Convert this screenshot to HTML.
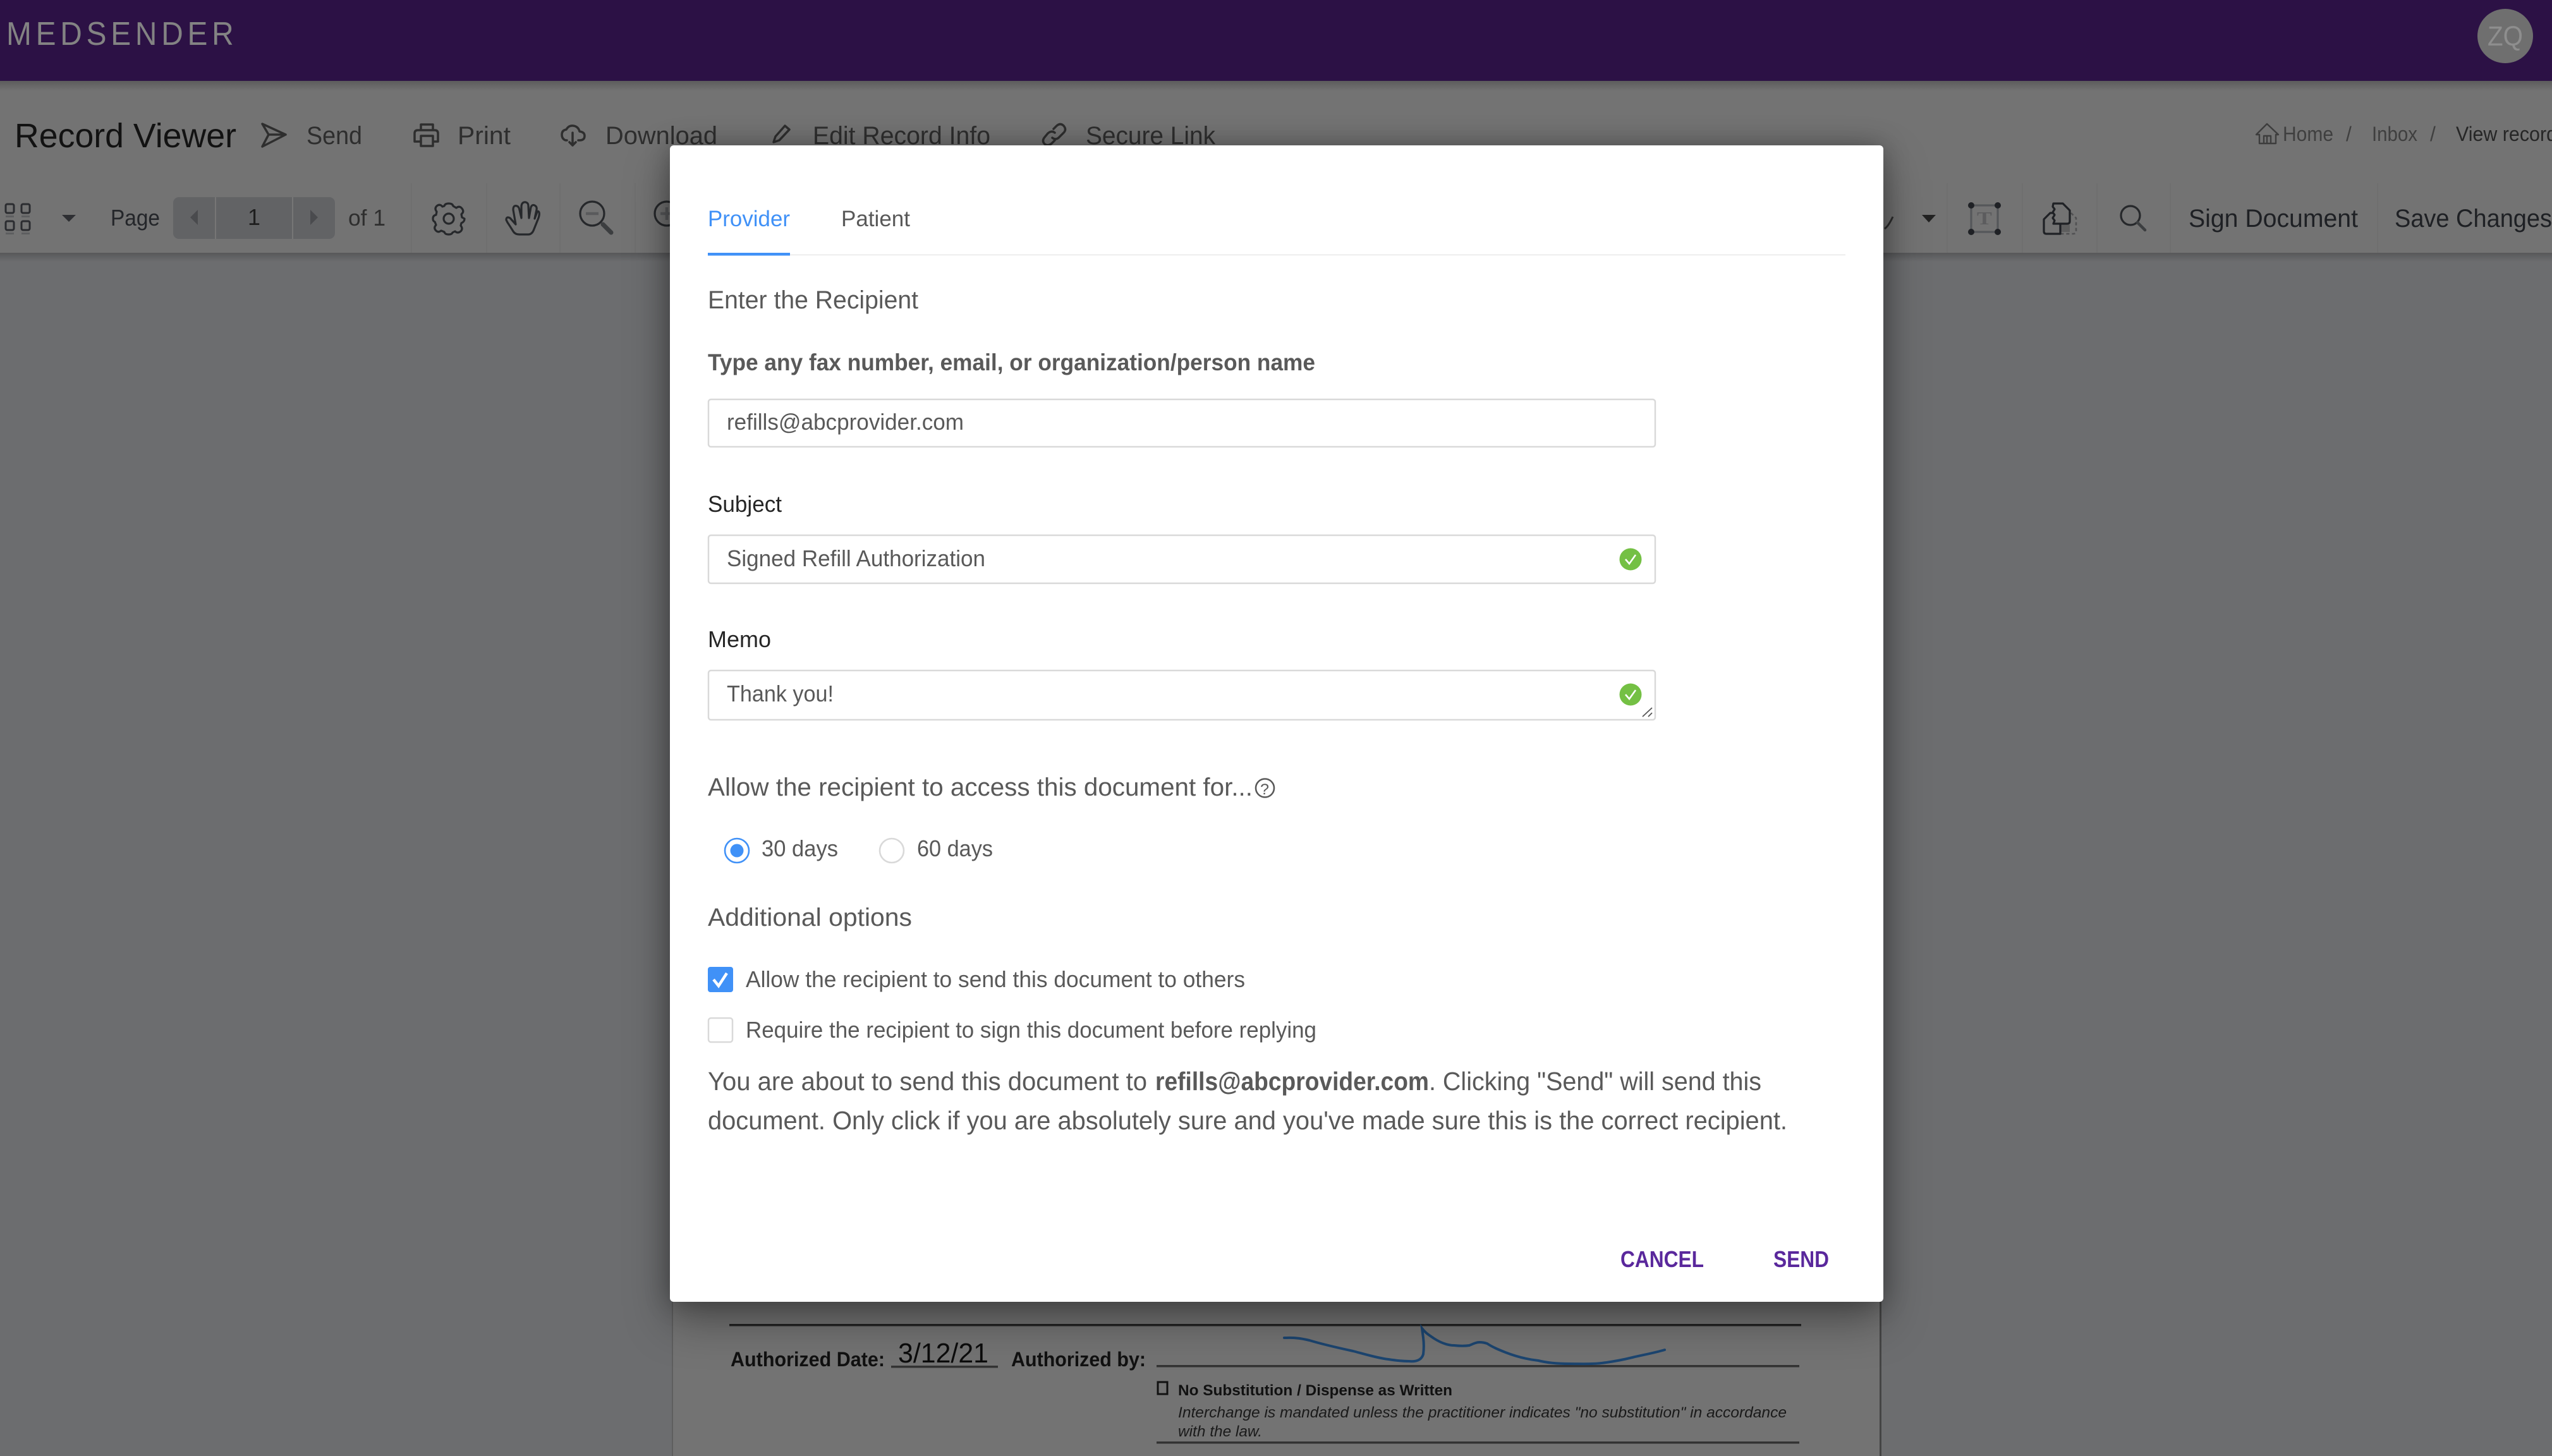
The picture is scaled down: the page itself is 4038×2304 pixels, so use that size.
<!DOCTYPE html>
<html><head><meta charset="utf-8"><style>
html,body{margin:0;padding:0;background:#6c6d6f}
body{width:4038px;height:2304px;position:relative;overflow:hidden;font-family:"Liberation Sans",sans-serif}
svg{position:absolute;left:0;top:0}
text{font-family:"Liberation Sans",sans-serif}
.m{position:absolute;left:1060px;top:230px;width:1920px;height:1830px;background:#fff;border-radius:6px;box-shadow:0 30px 70px rgba(0,0,0,.34),0 0 40px rgba(0,0,0,.28)}
</style></head><body>
<svg width="4038" height="2304" viewBox="0 0 4038 2304">
<defs><linearGradient id="s" x1="0" y1="0" x2="0" y2="1"><stop offset="0" stop-color="#000" stop-opacity=".2"/><stop offset="1" stop-color="#000" stop-opacity="0"/></linearGradient></defs>
<rect width="4038" height="2304" fill="#6c6d6f"/>
<rect x="1064" y="400" width="1911" height="1904" fill="#737373"/>
<rect x="1063" y="400" width="2" height="1904" fill="#5e5e5e"/>
<rect x="2974" y="400" width="3" height="1904" fill="#444"/>
<rect y="128" width="4038" height="272" fill="#737373"/>
<rect y="128" width="4038" height="16" fill="url(#s)"/>
<rect y="400" width="4038" height="14" fill="url(#s)"/>
<rect width="4038" height="128" fill="#2c1145"/>
<g transform="translate(10,71) scale(.92,1)"><text x="0" y="0" font-size="52" textLength="391" lengthAdjust="spacing" fill="#838383">MEDSENDER</text></g>
<ellipse cx="3964" cy="57" rx="44" ry="43" fill="#6f6f6f"/>
<text x="3936" y="72" font-size="44" textLength="56" lengthAdjust="spacingAndGlyphs" fill="#8e8e8e">ZQ</text>

<text x="23" y="233" font-size="54" textLength="351" lengthAdjust="spacingAndGlyphs" fill="#121212">Record Viewer</text>
<g fill="#2e2e2e" font-size="40">
<text x="485" y="228" textLength="88" lengthAdjust="spacingAndGlyphs">Send</text>
<text x="724" y="228" textLength="84" lengthAdjust="spacingAndGlyphs">Print</text>
<text x="958" y="228" textLength="177" lengthAdjust="spacingAndGlyphs">Download</text>
<text x="1286" y="228" textLength="281" lengthAdjust="spacingAndGlyphs">Edit Record Info</text>
<text x="1718" y="228" textLength="205" lengthAdjust="spacingAndGlyphs">Secure Link</text>
</g>
<g fill="none" stroke="#2e2e2e" stroke-width="3.5" stroke-linejoin="round" stroke-linecap="round">
<path d="M415 196L452 213L415 232L425 213ZM425 213H452"/>
<path d="M666 206V197H685V206M662 206H688Q693 206 693 211V224H685M666 224H656V211Q656 206 661 206M666 215H685V231H666Z"/>
<path d="M897 222H895Q889 220 889 213Q889 206 896 205Q900 198 907 199Q915 200 917 208Q925 209 925 215Q925 222 917 222H915M906 210V230M901 225L906 230L911 225"/>
<path d="M1224 225L1227 216L1242 199L1249 205L1233 222ZM1218 232H1256"/>
<path d="M1667 204L1672 199Q1678 194 1683 199Q1688 205 1683 210L1675 218Q1670 222 1665 218M1669 210Q1664 206 1658 211L1653 217Q1648 223 1653 228Q1658 232 1664 227L1669 222"/>
</g>

<rect x="274" y="312" width="256" height="66" rx="9" fill="#626365"/>
<rect x="340" y="312" width="2" height="66" fill="#767676"/><rect x="462" y="312" width="2" height="66" fill="#767676"/>
<path d="M313 332L301 344L313 356Z" fill="#4a4b4e"/>
<path d="M491 332L503 344L491 356Z" fill="#4a4b4e"/>
<g fill="none" stroke="#2b2c30" stroke-width="3">
<rect x="9" y="323" width="13" height="14" rx="2.5"/><rect x="34" y="323" width="13" height="14" rx="2.5"/>
<rect x="9" y="350" width="13" height="14" rx="2.5"/><rect x="34" y="350" width="13" height="14" rx="2.5"/>
</g>
<g fill="#5d5e60"><rect x="9" y="341" width="13" height="3"/><rect x="34" y="341" width="13" height="3"/><rect x="9" y="368" width="13" height="3"/><rect x="34" y="368" width="13" height="3"/></g>
<path d="M98 340H120L109 351Z" fill="#2e2f33"/>
<g fill="#24262a" font-size="36">
<text x="175" y="357" textLength="78" lengthAdjust="spacingAndGlyphs">Page</text>
<text x="551" y="357" textLength="59" lengthAdjust="spacingAndGlyphs" fill="#2e2e2e">of 1</text>
</g>
<text x="392" y="356" font-size="36" textLength="20" lengthAdjust="spacingAndGlyphs" fill="#1e1e1e">1</text>
<g fill="#6f6f6f">
<rect x="650" y="290" width="2" height="110"/><rect x="769" y="290" width="2" height="110"/><rect x="885" y="290" width="2" height="110"/><rect x="1004" y="290" width="2" height="110"/>
<rect x="3080" y="290" width="2" height="110"/><rect x="3199" y="290" width="2" height="110"/><rect x="3317" y="290" width="2" height="110"/><rect x="3433" y="290" width="2" height="110"/><rect x="3761" y="290" width="2" height="110"/>
</g>
<g fill="none" stroke="#26282b" stroke-width="3.2" stroke-linejoin="round" stroke-linecap="round">
<circle cx="710" cy="346" r="8"/>
<path d="M703 326Q704 322 710 322Q716 322 717 326L722 329Q727 325 731 330Q735 335 730 339L731 344Q735 346 735 346Q735 351 730 353L729 357Q733 362 729 366Q724 370 720 366L716 368Q715 371 710 371Q704 371 703 367L698 365Q693 369 689 364Q686 360 690 356L688 351Q685 350 685 346Q685 341 690 340L691 335Q687 330 691 326Q696 322 700 327Z"/>
<path d="M812 366Q807 358 803 352L801 348Q801 342 807 345L816 355L812 332Q812 324 818 326Q821 327 822 332L825 345V326Q826 319 832 320Q836 321 836 326L837 345L840 328Q842 323 846 325Q850 327 849 332L846 346L849 338Q851 332 853 336Q854 339 852 345L844 365Q841 371 836 371H822Q815 371 812 366Z"/>
<circle cx="937" cy="338" r="19"/>
</g>
<path d="M954 355L967 368" stroke="#3c3e40" stroke-width="7" stroke-linecap="round"/>
<path d="M927 338H947" stroke="#595a5c" stroke-width="4.5"/>
<circle cx="1055" cy="338" r="19" fill="none" stroke="#26282b" stroke-width="3.2"/>
<path d="M1045 338H1065M1055 328V348" stroke="#595a5c" stroke-width="4.5"/>

<path d="M3041 340H3063L3052 352Z" fill="#222"/>
<path d="M2982 362Q2988 358 2995 343" fill="none" stroke="#2e2e2e" stroke-width="3"/>
<rect x="3119" y="325" width="42" height="42" fill="none" stroke="#55575a" stroke-width="3.2"/>
<g fill="#1f2125"><circle cx="3119" cy="325" r="5"/><circle cx="3161" cy="325" r="5"/><circle cx="3119" cy="367" r="5"/><circle cx="3161" cy="367" r="5"/></g>
<g transform="translate(3128,355) scale(1.28,1)"><text x="0" y="0" font-size="28" font-weight="700" fill="#5c5c5e" style="font-family:'Liberation Serif',serif">T</text></g>
<path d="M3250 354H3270L3275 356V367H3260V354Z" fill="#5e5e5e"/>
<path d="M3277 337L3285 345V365Q3285 370 3280 370H3260" fill="none" stroke="#505052" stroke-width="2.6" stroke-dasharray="5 4"/>
<g fill="none" stroke="#1f2125" stroke-width="3.2" stroke-linejoin="round">
<path d="M3260 354V370H3238Q3234 370 3234 366V347L3244 337H3248"/>
<path d="M3249 322H3264L3275 333V350Q3275 354 3271 354H3249L3251 349L3248 345L3251 340L3248 336L3251 331L3248 327Z"/>
</g>
<circle cx="3371" cy="341" r="15" fill="none" stroke="#26282b" stroke-width="3.2"/>
<path d="M3382 352L3394 364" stroke="#3c3e40" stroke-width="4.5" stroke-linecap="round"/>
<g fill="#1e2024" font-size="40">
<text x="3463" y="359" textLength="268" lengthAdjust="spacingAndGlyphs">Sign Document</text>
<text x="3789" y="359" textLength="249" lengthAdjust="spacingAndGlyphs">Save Changes</text>
</g>
<path d="M3587 196L3570 213H3575V227H3601V213H3605ZM3582 227V215H3593V227M3587 215V227" fill="none" stroke="#3d3d3d" stroke-width="2.4" stroke-linejoin="round"/>
<g fill="#3f3f3f" font-size="32">
<text x="3612" y="223" textLength="80" lengthAdjust="spacingAndGlyphs">Home</text>
<text x="3712" y="223">/</text>
<text x="3753" y="223" textLength="72" lengthAdjust="spacingAndGlyphs">Inbox</text>
<text x="3845" y="223">/</text>
</g>
<text x="3886" y="223" font-size="32" fill="#262626" textLength="160" lengthAdjust="spacingAndGlyphs">View record</text>

<rect x="1154" y="2095" width="1696" height="3.5" fill="#222"/>
<g fill="#111" font-weight="700" font-size="32">
<text x="1156" y="2162" textLength="244" lengthAdjust="spacingAndGlyphs">Authorized Date:</text>
<text x="1600" y="2162" textLength="213" lengthAdjust="spacingAndGlyphs">Authorized by:</text>
</g>
<text x="1421" y="2156" font-size="44" fill="#0c0c0c" textLength="143" lengthAdjust="spacingAndGlyphs">3/12/21</text>
<rect x="1410" y="2161" width="169" height="3.5" fill="#333"/>
<rect x="1830" y="2160" width="1017" height="3.5" fill="#333"/>
<path d="M2032 2117C2042 2117 2052 2116 2072 2121C2095 2128 2118 2133 2141 2138C2160 2143 2180 2149 2197 2151C2210 2153 2220 2154 2229 2154C2240 2155 2249 2153 2252 2143C2253 2135 2253 2125 2252 2117L2250 2102C2256 2110 2262 2113 2269 2118C2280 2125 2290 2129 2301 2129C2310 2130 2318 2130 2325 2129C2332 2126 2336 2124 2341 2124C2346 2124 2350 2125 2353 2126C2362 2132 2372 2136 2382 2140C2400 2147 2416 2151 2434 2153C2450 2157 2466 2158 2482 2158C2500 2158 2518 2159 2534 2157C2550 2155 2567 2152 2583 2148C2600 2144 2617 2141 2634 2136" fill="none" stroke="#1c4570" stroke-width="4" stroke-linecap="round"/>
<rect x="1832" y="2187" width="15" height="19" fill="none" stroke="#111" stroke-width="3"/>
<text x="1864" y="2208" font-size="24" font-weight="700" fill="#111" textLength="434" lengthAdjust="spacingAndGlyphs">No Substitution / Dispense as Written</text>
<text x="1864" y="2243" font-size="24" font-style="italic" fill="#1a1a1a" textLength="963" lengthAdjust="spacingAndGlyphs">Interchange is mandated unless the practitioner indicates "no substitution" in accordance</text>
<text x="1864" y="2273" font-size="24" font-style="italic" fill="#1a1a1a" textLength="133" lengthAdjust="spacingAndGlyphs">with the law.</text>
<rect x="1830" y="2281" width="1017" height="3.5" fill="#333"/>
</svg>

<div class="m"></div>

<svg width="4038" height="2304" viewBox="0 0 4038 2304">
<rect x="1120" y="402" width="1800" height="2.5" fill="#f0f0f0"/>
<rect x="1120" y="400" width="130" height="4.5" fill="#4091f7"/>
<text x="1120" y="358" font-size="35" fill="#4091f7" textLength="130" lengthAdjust="spacingAndGlyphs">Provider</text>
<text x="1331" y="358" font-size="35" fill="#595959" textLength="109" lengthAdjust="spacingAndGlyphs">Patient</text>
<g fill="#595959">
<text x="1120" y="488" font-size="40" textLength="333" lengthAdjust="spacingAndGlyphs">Enter the Recipient</text>
<text x="1120" y="586" font-size="37" font-weight="700" textLength="961" lengthAdjust="spacingAndGlyphs">Type any fax number, email, or organization/person name</text>
<text x="1120" y="1259" font-size="40" textLength="862" lengthAdjust="spacingAndGlyphs">Allow the recipient to access this document for...</text>
<text x="1205" y="1355" font-size="36" textLength="121" lengthAdjust="spacingAndGlyphs">30 days</text>
<text x="1451" y="1355" font-size="36" textLength="120" lengthAdjust="spacingAndGlyphs">60 days</text>
<text x="1120" y="1465" font-size="40" textLength="323" lengthAdjust="spacingAndGlyphs">Additional options</text>
<text x="1180" y="1562" font-size="36" textLength="790" lengthAdjust="spacingAndGlyphs">Allow the recipient to send this document to others</text>
<text x="1180" y="1642" font-size="36" textLength="903" lengthAdjust="spacingAndGlyphs">Require the recipient to sign this document before replying</text>
<text x="1120" y="1725" font-size="41" textLength="695" lengthAdjust="spacingAndGlyphs">You are about to send this document to</text>
<text x="1828" y="1725" font-size="41" font-weight="700" textLength="433" lengthAdjust="spacingAndGlyphs">refills@abcprovider.com</text>
<text x="2261" y="1725" font-size="41" textLength="526" lengthAdjust="spacingAndGlyphs">. Clicking "Send" will send this</text>
<text x="1120" y="1787" font-size="41" textLength="1708" lengthAdjust="spacingAndGlyphs">document. Only click if you are absolutely sure and you've made sure this is the correct recipient.</text>
</g>
<g fill="#262626" font-size="36">
<text x="1120" y="810" textLength="117" lengthAdjust="spacingAndGlyphs">Subject</text>
<text x="1120" y="1024" textLength="100" lengthAdjust="spacingAndGlyphs">Memo</text>
</g>
<g fill="#fff" stroke="#d9d9d9" stroke-width="2.5">
<rect x="1121" y="632" width="1498" height="75" rx="4"/>
<rect x="1121" y="847" width="1498" height="76" rx="4"/>
<rect x="1121" y="1061" width="1498" height="78" rx="4"/>
</g>
<g fill="#595959">
<text x="1150" y="680" font-size="36" textLength="375" lengthAdjust="spacingAndGlyphs">refills@abcprovider.com</text>
<text x="1150" y="896" font-size="36" textLength="409" lengthAdjust="spacingAndGlyphs">Signed Refill Authorization</text>
<text x="1150" y="1110" font-size="36" textLength="169" lengthAdjust="spacingAndGlyphs">Thank you!</text>
</g>
<circle cx="2580" cy="885" r="17.5" fill="#74c044"/>
<path d="M2572 885L2578 892L2588 878" fill="none" stroke="#fff" stroke-width="2.6"/>
<circle cx="2580" cy="1099" r="17.5" fill="#74c044"/>
<path d="M2572 1099L2578 1106L2588 1092" fill="none" stroke="#fff" stroke-width="2.6"/>
<path d="M2599 1134L2614 1120M2608 1134L2614 1128" stroke="#555" stroke-width="1.8" fill="none"/>
<circle cx="2001.5" cy="1247" r="14.5" fill="none" stroke="#595959" stroke-width="2.6"/>
<text x="1994" y="1257" font-size="24" fill="#595959" textLength="14" lengthAdjust="spacingAndGlyphs">?</text>
<circle cx="1166" cy="1346" r="19" fill="#fff" stroke="#4091f7" stroke-width="2.6"/>
<circle cx="1166" cy="1346" r="10.5" fill="#4091f7"/>
<circle cx="1411" cy="1346" r="19" fill="#fff" stroke="#d9d9d9" stroke-width="2.6"/>
<rect x="1120" y="1530" width="40" height="40" rx="4" fill="#4091f7"/>
<path d="M1129 1550L1137 1560L1150 1540" fill="none" stroke="#fff" stroke-width="4.5"/>
<rect x="1121" y="1611" width="38" height="38" rx="4" fill="#fff" stroke="#d9d9d9" stroke-width="2.5"/>
<g fill="#5a289c" font-size="36" font-weight="700">
<text x="2564" y="2005" textLength="132" lengthAdjust="spacingAndGlyphs">CANCEL</text>
<text x="2806" y="2005" textLength="88" lengthAdjust="spacingAndGlyphs">SEND</text>
</g>
</svg>
</body></html>
